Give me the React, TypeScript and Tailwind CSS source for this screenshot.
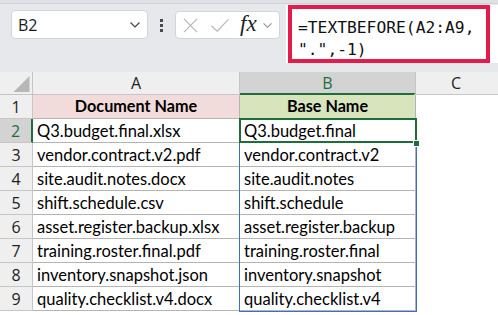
import React from 'react'

const rows: [string, string][] = [
  ['Q3.budget.final.xlsx', 'Q3.budget.final'],
  ['vendor.contract.v2.pdf', 'vendor.contract.v2'],
  ['site.audit.notes.docx', 'site.audit.notes'],
  ['shift.schedule.csv', 'shift.schedule'],
  ['asset.register.backup.xlsx', 'asset.register.backup'],
  ['training.roster.final.pdf', 'training.roster.final'],
  ['inventory.snapshot.json', 'inventory.snapshot'],
  ['quality.checklist.v4.docx', 'quality.checklist.v4'],
]

const uiFont = { fontFamily: '"Open Sans", "Noto Sans", sans-serif' }
const cellFont = { fontFamily: 'Lato, "Noto Sans", sans-serif' }

function Chevron({ className }: { className?: string }) {
  return (
    <svg viewBox="0 0 12 8" className={className} fill="none" stroke="currentColor" strokeWidth="1.2">
      <path d="M1.5 1.5 L6 6 L10.5 1.5" />
    </svg>
  )
}

function Toolbar() {
  return (
    <div className="h-[72px] bg-[#e7e8ec] flex flex-col">
      <div className="h-[4px] bg-[#dfe0e4] border-b border-[#d3d4d8]" />
      <div className="flex items-start">
        {/* name box */}
        <div className="ml-[11px] mt-[6px] w-[137px] h-[29px] bg-white border border-[#d4d4d6] rounded-[4px] flex items-center justify-between pl-[6px] pr-[6px]">
          <span className="text-[16px] text-[#1a1a1a]" style={uiFont}>B2</span>
          <Chevron className="w-[12px] h-[8px] text-[#444]" />
        </div>
        {/* drag handle dots */}
        <div className="ml-[12px] mt-[15px] flex flex-col gap-[2px]">
          <div className="w-[3px] h-[3px] bg-[#4a4a4a]" />
          <div className="w-[3px] h-[3px] bg-[#4a4a4a]" />
          <div className="w-[3px] h-[3px] bg-[#4a4a4a]" />
        </div>
        {/* cancel / enter / fx */}
        <div className="ml-[12px] mt-[7px] w-[105px] h-[28px] bg-white border border-[#d4d4d6] rounded-[4px] flex items-center pl-[7px]">
          <svg viewBox="0 0 16 16" className="w-[15px] h-[15px]" fill="none" stroke="#b4b4b4" strokeWidth="1.2">
            <path d="M1 1 L15 15 M15 1 L1 15" />
          </svg>
          <svg viewBox="0 0 20 16" className="ml-[12px] w-[20px] h-[15px]" fill="none" stroke="#b4b4b4" strokeWidth="1.2">
            <path d="M1 8.5 L7 14 L19 1.5" />
          </svg>
          <span className="ml-[10px] text-[23px] italic leading-none text-[#222] -mt-[3px]" style={{ fontFamily: '"Liberation Serif", serif' }}>
            fx
          </span>
          <Chevron className="ml-[5px] w-[11px] h-[7px] text-[#8a8a8a]" />
        </div>
        {/* formula bar */}
        <div className="ml-[6px] mt-[1px] flex-1 h-[58px] bg-white pl-[2px]">
          <div
            className="w-[202px] h-full border-[4px] border-[#e31c4b] pl-[6px] pt-[8px] text-[16.3px] leading-[22px] text-[#111]"
            style={{ fontFamily: '"DejaVu Sans Mono", "Liberation Mono", monospace' }}
          >
            <div>=TEXTBEFORE(A2:A9,</div>
            <div>".",-1)</div>
          </div>
        </div>
      </div>
    </div>
  )
}

function Grid() {
  return (
    <div className="relative">
      {/* column headers */}
      <div className="flex h-[23px] bg-[#efefef] text-[16px] text-[#222]" style={uiFont}>
        <div className="w-[33px] border-r border-b border-[#c6c6c6] flex items-end justify-end pr-[2px] pb-[2px]">
          <svg viewBox="0 0 16 16" className="w-[17px] h-[16px]">
            <path d="M16 0 L16 16 L0 16 Z" fill="#b7b7b7" />
          </svg>
        </div>
        <div className="w-[207px] border-r border-b border-[#c6c6c6] flex items-center justify-center">A</div>
        <div className="w-[176px] bg-[#d3d3d3] border-r border-[#c6c6c6] border-b-2 border-b-[#1e6e3c] text-[#1e6e3c] flex items-center justify-center">
          B
        </div>
        <div className="flex-1 border-b border-[#c6c6c6] flex items-center justify-center -ml-[2px]">C</div>
      </div>

      {/* row 1 */}
      <div className="flex h-[24px]">
        <div className="w-[33px] bg-[#efefef] border-r border-b border-[#c6c6c6] flex items-center justify-center text-[16px] text-[#222]" style={uiFont}>
          1
        </div>
        <div className="w-[207px] bg-[#f2dcdb] border-r border-b border-[#b4b4b4] flex items-center justify-center text-[16.2px] font-bold text-black" style={cellFont}>
          Document Name
        </div>
        <div className="w-[176px] bg-[#d8e4bc] border-r border-b border-[#b4b4b4] flex items-center justify-center text-[16.2px] font-bold text-black" style={cellFont}>
          Base Name
        </div>
        <div className="flex-1" />
      </div>

      {rows.map(([doc, base], i) => {
        const selected = i === 0
        return (
          <div key={doc} className="flex h-[24px]">
            <div
              className={
                selected
                  ? 'w-[33px] bg-[#d3d3d3] border-r-2 border-r-[#1e6e3c] border-b border-b-[#c6c6c6] flex items-center justify-center text-[16px] text-[#1e6e3c]'
                  : 'w-[33px] bg-[#efefef] border-r border-b border-[#c6c6c6] flex items-center justify-center text-[16px] text-[#222]'
              }
              style={uiFont}
            >
              {i + 2}
            </div>
            <div className="w-[207px] border-r border-b border-[#b4b4b4] flex items-center pl-[4px] pt-[1px] text-[16.5px] text-black" style={cellFont}>
              {doc}
            </div>
            <div className="w-[176px] border-r border-b border-[#b4b4b4] flex items-center pl-[4px] pt-[1px] text-[16.5px] text-black" style={cellFont}>
              {base}
            </div>
            <div className="flex-1" />
          </div>
        )
      })}

      {/* spill range outline B3:B9 */}
      <div className="absolute left-[239px] top-[70px] w-[178px] h-[170px] border border-[#3a6fce] pointer-events-none" />
      {/* active cell B2 */}
      <div className="absolute left-[239px] top-[46px] w-[178px] h-[25px] border-2 border-[#1e6e3c] pointer-events-none" />
      <div className="absolute left-[413px] top-[68px] w-[7px] h-[7px] bg-[#1e6e3c] border border-white pointer-events-none" />
    </div>
  )
}

export default function App() {
  return (
    <div className="w-[498px] h-[315px] overflow-hidden bg-white">
      <Toolbar />
      <Grid />
    </div>
  )
}
